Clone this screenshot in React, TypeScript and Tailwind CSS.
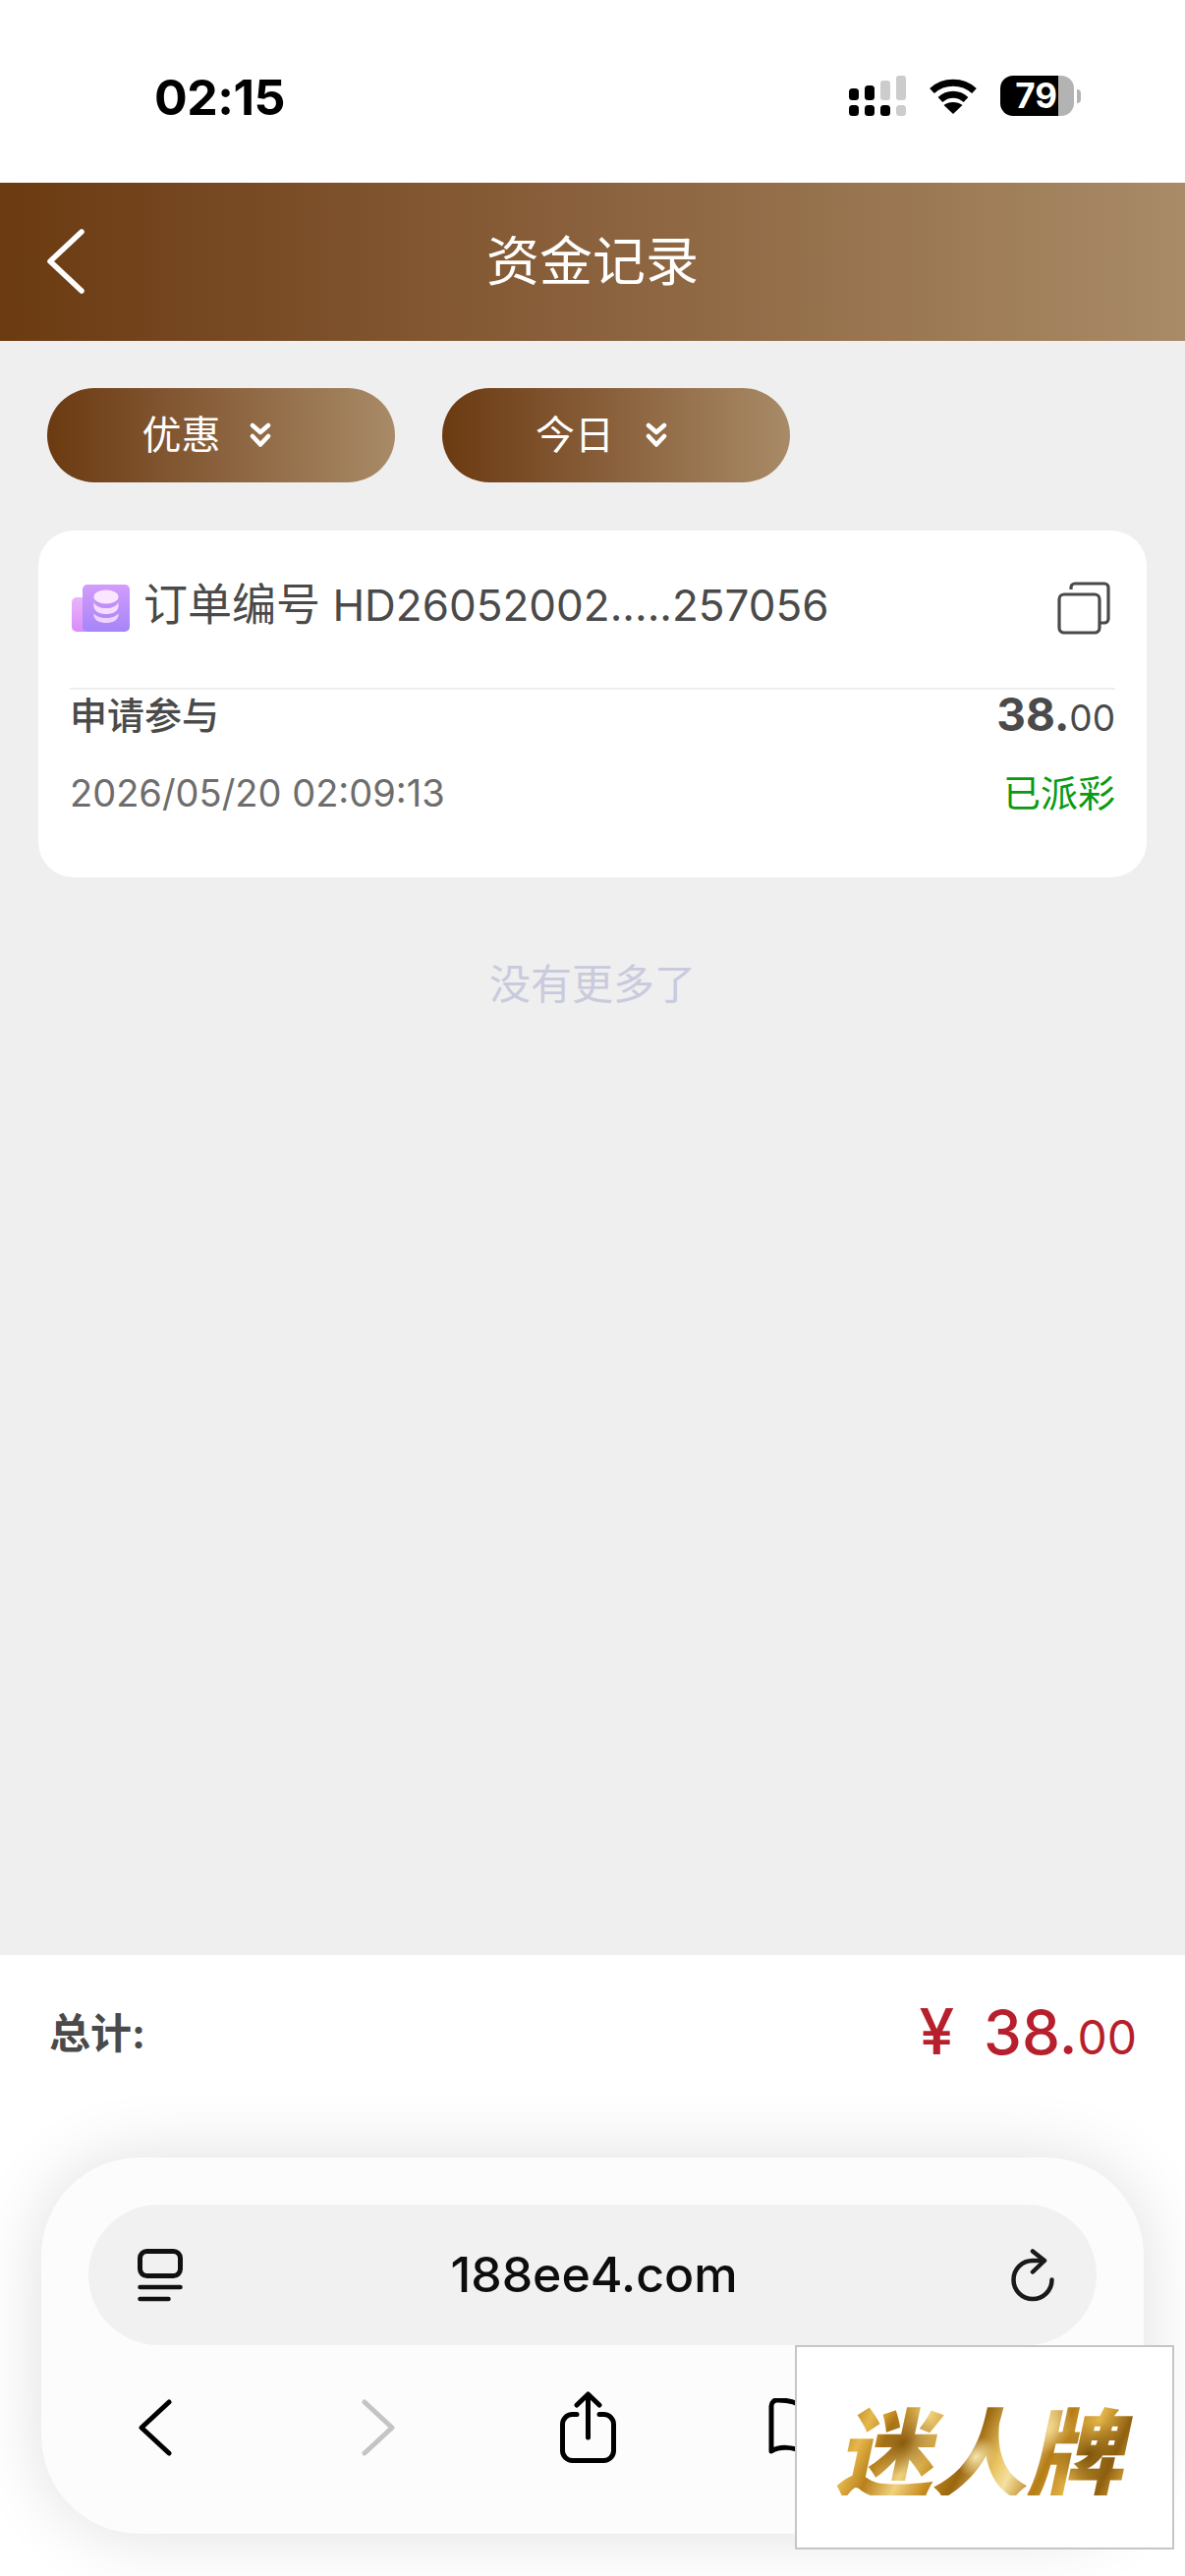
const cjk = "font-['Inter','Noto_Sans_CJK_SC',sans-serif]";

function SignalIcon() {
  return (
    <svg width="58" height="41" viewBox="0 0 58 41">
      <rect x="0" y="13" width="10" height="12" rx="3.5" fill="#000" />
      <rect x="16" y="10" width="10" height="15" rx="3.5" fill="#000" />
      <rect x="32" y="5" width="10" height="20" rx="3" fill="#ccc" />
      <rect x="48" y="0" width="10" height="25" rx="3" fill="#ccc" />
      <rect x="0" y="30" width="10" height="11" rx="3.5" fill="#000" />
      <rect x="16" y="30" width="10" height="11" rx="3.5" fill="#000" />
      <rect x="32" y="30" width="10" height="11" rx="3.5" fill="#000" />
      <rect x="48" y="30" width="10" height="11" rx="3.5" fill="#ccc" />
    </svg>
  );
}

function WifiIcon() {
  return (
    <svg width="50" height="37" viewBox="0 0 50 37">
      <path d="M3.5 13.5C15.5 2.5 34.5 2.500 46.5 13.5" fill="none" stroke="#000" strokeWidth="7" />
      <path d="M12 22.5C19.5 15.5 30.5 15.5 38 22.5" fill="none" stroke="#000" strokeWidth="7" />
      <path d="M15.500 28C20.5 24 29.5 24 34.5 28L25 37Z" fill="#000" />
    </svg>
  );
}

function DoubleChevron() {
  return (
    <svg width="22" height="26" viewBox="0 0 22 26" fill="none" stroke="#fff" strokeWidth="4.500" strokeLinecap="round" strokeLinejoin="round">
      <path d="M3 3l8 7 8-7" />
      <path d="M3 14l8 8.500 8-8.500" />
    </svg>
  );
}

function FilterPill({ label, gap }: { label: string; gap: string }) {
  return (
    <div className={`flex h-[96px] w-[354px] items-center justify-center rounded-[48px] bg-gradient-to-r from-[#6b3a10] to-[#a98b67] pr-[30px] text-[40px] text-white ${gap}`}>
      <span>{label}</span>
      <DoubleChevron />
    </div>
  );
}

function CoinsIcon() {
  return (
    <svg className="mt-[6px] ml-[2px]" width="60" height="50" viewBox="0 0 60 50">
      <defs>
        <linearGradient id="back" x1="0" y1="0" x2="0" y2="1">
          <stop offset="0" stopColor="#eab5fb" />
          <stop offset="1" stopColor="#d98cf8" />
        </linearGradient>
        <linearGradient id="front" x1="0" y1="0" x2="0" y2="1">
          <stop offset="0" stopColor="#d39cfb" />
          <stop offset="1" stopColor="#a585f8" />
        </linearGradient>
      </defs>
      <rect x="0" y="14" width="30" height="35" rx="5" fill="url(#back)" />
      <rect x="11" y="1" width="48" height="48" rx="5" fill="url(#front)" />
      <ellipse cx="35" cy="13.5" rx="12.5" ry="7" fill="#fbe6ff" />
      <path d="M22.5 19c2 4 6.5 6 12.5 6s10.500-2 12.500-6v5c-1 4.500-6 7-12.500 7s-11.500-2.500-12.500-7z" fill="#f6dcff" />
      <path d="M22.500 30c2 3.500 6.500 5 12.500 5s10.500-1.500 12.500-5v3c-1 4.500-6 7-12.500 7s-11.500-2.500-12.500-7z" fill="#f0d2ff" />
    </svg>
  );
}

function CopyIcon() {
  return (
    <svg className="mt-[6px]" width="54" height="54" viewBox="0 0 54 54" fill="none" stroke="#4a4a4a" strokeWidth="3.200">
      <path d="M14 8V6a4 4 0 0 1 4-4h30a4 4 0 0 1 4 4v32a4 4 0 0 1-4 4h-4" />
      <rect x="2" y="13" width="41" height="39" rx="5" />
    </svg>
  );
}

function TabsIcon() {
  return (
    <svg width="46" height="54" viewBox="0 0 46 54" fill="none" stroke="#111" strokeLinecap="round">
      <rect x="2.500" y="2.500" width="41" height="25" rx="7" strokeWidth="5" />
      <path d="M2.500 39h41" strokeWidth="4.500" />
      <path d="M2.500 51h29" strokeWidth="4.500" />
    </svg>
  );
}

function ReloadIcon() {
  return (
    <svg width="44" height="54" viewBox="0 0 44 54" fill="none" stroke="#1a1a1a" strokeWidth="4.500" strokeLinecap="round" strokeLinejoin="round">
      <path d="M33 12H22A19.500 19.500 0 1 0 41.500 31.500" />
      <path d="M22 2.500L34 12 22 23.500" />
    </svg>
  );
}

function ShareIcon() {
  return (
    <svg className="ml-[167px]" width="57" height="73" viewBox="0 0 57 73" fill="none" stroke="#000" strokeWidth="5" strokeLinecap="round" strokeLinejoin="round">
      <path d="M17 23.500H12.500a10 10 0 0 0-10 10v27a10 10 0 0 0 10 10h32a10 10 0 0 0 10-10v-27a10 10 0 0 0-10-10H40" />
      <path d="M28.500 47V3M17 14L28.500 3 40 14" />
    </svg>
  );
}

function LogoOverlay() {
  return (
    <div className="absolute right-[11px] bottom-[27px] flex h-[208px] w-[386px] items-center justify-center border-2 border-[#c6c6c6] bg-white">
      <span className="inline-block -skew-x-12 bg-[radial-gradient(circle_at_22%_45%,#8a5a0c_0,transparent_14%),radial-gradient(circle_at_48%_60%,#f7e6ad_0,transparent_12%),radial-gradient(circle_at_86%_58%,#7d5209_0,transparent_13%),radial-gradient(circle_at_70%_30%,#f4dd95_0,transparent_12%),linear-gradient(105deg,#a8700f_0%,#e6b94c_10%,#b9801a_18%,#f0d27e_28%,#c48a1c_38%,#9a6610_46%,#e9c25f_56%,#f5e0a0_62%,#b57c16_72%,#e3b548_82%,#8f600f_92%,#d9a63a_100%)] bg-clip-text pl-[8px] font-['Noto_Sans_CJK_SC',sans-serif] text-[98px] leading-none font-black tracking-[-1px] text-transparent">
        迷人牌
      </span>
    </div>
  );
}

export default function App() {
  return (
    <div className={`relative flex h-[2622px] w-[1206px] flex-col overflow-hidden bg-[#efefef] ${cjk}`}>
      {/* status bar */}
      <div className="flex h-[186px] items-start justify-between bg-white pt-[74px] pr-[106px] pl-[157px]">
        <span className="text-[50px] leading-[50px] font-bold tracking-[-0.5px] text-black">02:15</span>
        <div className="flex items-start gap-[23px] pt-[3px]">
          <SignalIcon />
          <div className="pt-[2px]">
            <WifiIcon />
          </div>
          <div className="flex items-center gap-[3px]">
            <div className="flex h-[41px] w-[75px] overflow-hidden rounded-[13px]">
              <div className="flex w-[59px] items-center justify-end bg-black pr-[1px] text-[35px] leading-none font-bold text-white">79</div>
              <div className="w-[16px] bg-[#b3b3b3]" />
            </div>
            <div className="h-[14px] w-[4px] rounded-r-full bg-[#b3b3b3]" />
          </div>
        </div>
      </div>

      {/* header */}
      <div className="relative flex h-[161px] items-center justify-center bg-gradient-to-r from-[#6b3a10] to-[#a98b67]">
        <svg className="absolute top-[47px] left-[48px]" width="38" height="66" viewBox="0 0 38 66" fill="none" stroke="#fff" strokeWidth="5.500" strokeLinecap="round" strokeLinejoin="round">
          <path d="M35 3L3 33l32 30" />
        </svg>
        <span className="text-[54px] text-white">资金记录</span>
      </div>

      <main className="flex-1">
        <div className="flex gap-[48px] pt-[48px] pl-[48px]">
          <FilterPill label="优惠" gap="gap-[29px]" />
          <FilterPill label="今日" gap="gap-[32px]" />
        </div>

        {/* record card */}
        <div className="mx-[39px] mt-[49px] h-[353px] rounded-[36px] bg-white px-[32px]">
          <div className="flex h-[162px] items-center justify-between border-b-2 border-[#eeeeee] pr-[5px] pb-[8px]">
            <div className="flex items-center gap-[13px]">
              <CoinsIcon />
              <span className="text-[44px] text-[#4a4a4a]">
                <span className="text-[45px]">订单编号</span> HD26052002.....257056
              </span>
            </div>
            <CopyIcon />
          </div>
          <div className="flex h-[50px] items-center justify-between text-[#4a4a4a]">
            <span className="pt-[3px] text-[38px] font-medium">申请参与</span>
            <span className="text-[46px] font-bold">
              38.<span className="text-[37px] font-normal">00</span>
            </span>
          </div>
          <div className="mt-[30px] flex h-[50px] items-center justify-between">
            <span className="text-[38px] text-[#6d6d6d]">2026/05/20 02:09:13</span>
            <span className="text-[38px] text-[#0a9a12]">已派彩</span>
          </div>
        </div>

        <p className="mt-[77px] text-center text-[42px] text-[#c9cbdd]">没有更多了</p>
      </main>

      {/* total + browser bar */}
      <div className="flex h-[632px] flex-col bg-white pb-[43px]">
        <div className="flex h-[206px] items-start justify-between pt-[30px] pr-[49px] pl-[50px]">
          <span className="pt-[18px] text-[42px] font-bold text-[#4a4a4a]">总计:</span>
          <span className="font-medium text-[#b71f2c]">
            <span className="mr-[30px] text-[64px]">¥</span>
            <span className="text-[62px]">38.</span>
            <span className="text-[48px] font-normal">00</span>
          </span>
        </div>
        <div className="mx-[42px] flex-1 rounded-[100px] bg-[#fcfcfc] px-[48px] pt-[48px] shadow-[0_0_70px_rgba(0,0,0,0.13)]">
          <div className="flex h-[143px] items-center justify-between rounded-[72px] bg-[#f1f1f2] pr-[43px] pl-[50px]">
            <TabsIcon />
            <span className="mr-[6px] text-[50px] font-medium text-[#0d0d0d]">188ee4.com</span>
            <ReloadIcon />
          </div>
          <div className="flex items-center pt-[47px] pl-[50px]">
            <svg width="36" height="58" viewBox="0 0 36 58" fill="none" stroke="#000" strokeWidth="5" strokeLinecap="round" strokeLinejoin="round">
              <path d="M32 3L4 29l28 26" />
            </svg>
            <svg className="ml-[191px]" width="36" height="58" viewBox="0 0 36 58" fill="none" stroke="#c4c4c4" strokeWidth="5" strokeLinecap="round" strokeLinejoin="round">
              <path d="M4 3l28 26L4 55" />
            </svg>
            <ShareIcon />
            <svg className="ml-[155px]" width="70" height="60" viewBox="0 0 70 60" fill="none" stroke="#000" strokeWidth="5" strokeLinecap="round" strokeLinejoin="round">
              <path d="M35 10C30 4 22 2 10 2a6 6 0 0 0-7 6v46c8-5 22-5 32 1 10-6 24-6 32-1V8a6 6 0 0 0-7-6c-12 0-20 2-25 8z" />
            </svg>
          </div>
        </div>
      </div>

      <LogoOverlay />
    </div>
  );
}
